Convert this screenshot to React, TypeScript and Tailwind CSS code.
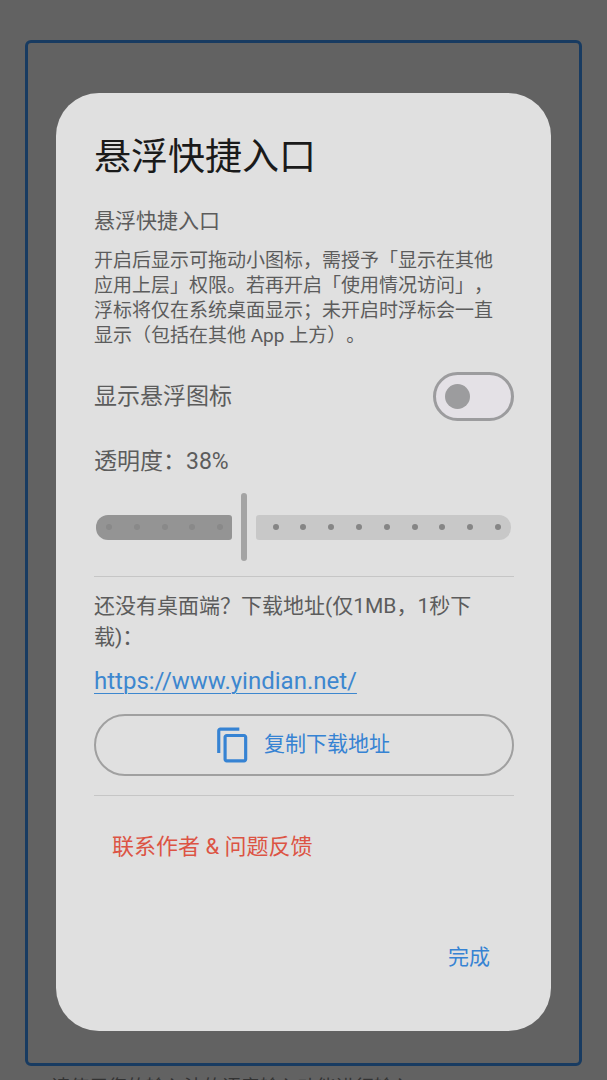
import React, { useState } from "react";

interface OpacitySliderProps {
  value: number;
  onChange: (value: number) => void;
}

const MIN_OPACITY = 5;
const MAX_OPACITY = 100;
const TICKS = Array.from({ length: 15 }, (_, i) => i / 14);

const DOWNLOAD_URL = "https://www.yindian.net/";

const CopyIcon: React.FC = () => (
  <svg viewBox="0 0 24 24" className="size-[38px]" fill="currentColor" aria-hidden="true">
    <path d="M16 1H4c-1.100 0-2 .9-2 2v14h2V3h12V1zm3 4H8c-1.100 0-2 .9-2 2v14c0 1.100.9 2 2 2h11c1.100 0 2-.9 2-2V7c0-1.100-.9-2-2-2zm0 16H8V7h11v14z" />
  </svg>
);

const OpacitySlider: React.FC<OpacitySliderProps> = ({ value, onChange }) => {
  const ratio = (value - MIN_OPACITY) / (MAX_OPACITY - MIN_OPACITY);

  return (
    <div className="relative mr-[3px] ml-0.5 mt-[15px] h-17">
      <div className="flex h-full items-center gap-[9px]">
        <div
          className="h-[25px] rounded-l-[12px] rounded-r-[3px] bg-[#949494]"
          style={{ flex: `${ratio} 1 0%` }}
        />
        <div className="h-full w-1.5 rounded-full bg-[#a4a4a4]" />
        <div
          className="h-[25px] rounded-l-[3px] rounded-r-[12px] bg-[#c8c8c8]"
          style={{ flex: `${1 - ratio} 1 0%` }}
        />
      </div>
      <div className="absolute inset-0 flex items-center justify-between px-[10px]">
        {TICKS.map((tick) => {
          const covered = Math.abs(tick - ratio) < 0.03;
          const color = tick < ratio ? "bg-[#898989]" : "bg-[#868686]";
          return (
            <span
              key={tick}
              className={`size-1.5 rounded-full ${covered ? "invisible" : color}`}
            />
          );
        })}
      </div>
      <input
        id="opacity"
        type="range"
        min={MIN_OPACITY}
        max={MAX_OPACITY}
        value={value}
        onChange={(e) => onChange(Number(e.target.value))}
        className="absolute inset-0 h-full w-full cursor-pointer opacity-0"
      />
    </div>
  );
};

const App: React.FC = () => {
  const [floating, setFloating] = useState(false);
  const [opacity, setOpacity] = useState(38);

  return (
    <div className="relative h-screen overflow-hidden bg-[#626262] font-['Roboto','Noto_Sans_CJK_SC',sans-serif] [text-spacing-trim:space-all]">
      <main className="px-[25px] pt-10">
        <textarea
          aria-label="输入内容"
          readOnly
          className="block h-[95vh] w-full resize-none rounded-md border-3 border-[#183b61] outline-none"
        />
        <p className="mt-2 ml-[26px] text-[19px] leading-7 text-[#333333]">
          请使用您的输入法的语音输入功能进行输入
        </p>
      </main>

      <div className="absolute inset-0 flex items-center px-14 pt-11">
        <div
          role="dialog"
          aria-modal="true"
          aria-labelledby="dialog-title"
          className="w-full rounded-[43px] bg-[#e0e0e0] pt-[41px] pr-[37px] pb-[43px] pl-[38px] text-[#5c5c5c]"
        >
          <h1 id="dialog-title" className="text-[37px] leading-12 text-[#1a1a1a]">
            悬浮快捷入口
          </h1>

          <h2 className="mt-6 text-[21px] leading-[30px]">悬浮快捷入口</h2>
          <p className="mt-3 pr-3 text-[19px] leading-[25px]">
            开启后显示可拖动小图标，需授予「显示在其他应用上层」权限。若再开启「使用情况访问」，浮标将仅在系统桌面显示；未开启时浮标会一直显示（包括在其他
            App 上方）。
          </p>

          <div className="mt-6 flex items-center justify-between">
            <label htmlFor="floating" className="text-[23px] leading-8">
              显示悬浮图标
            </label>
            <input
              id="floating"
              type="checkbox"
              role="switch"
              checked={floating}
              onChange={(e) => setFloating(e.target.checked)}
              className="flex h-[49px] w-[81px] appearance-none items-center rounded-full border-3 border-[#9c9c9e] bg-[#e4e1e6] px-[9px] before:size-[25px] before:rounded-full before:bg-[#9c9c9e] checked:justify-end checked:bg-[#b9d2ee]"
            />
          </div>

          <label htmlFor="opacity" className="mt-[25px] block text-[23px] leading-8">
            透明度：{opacity}%
          </label>
          <OpacitySlider value={opacity} onChange={setOpacity} />

          <hr className="mt-[15px] border-[#c6c6c6]" />

          <p className="mt-[14px] text-[21px] leading-[31px]">
            还没有桌面端？下载地址(仅1MB，1秒下载)：
          </p>
          <a
            href={DOWNLOAD_URL}
            className="mt-3 block w-fit text-[24px] leading-8 text-[#3d87cf] underline decoration-1 underline-offset-4"
          >
            {DOWNLOAD_URL}
          </a>

          <button
            type="button"
            onClick={() => navigator.clipboard?.writeText(DOWNLOAD_URL)}
            className="mt-[17px] flex h-[62px] w-full items-center justify-center gap-3 rounded-full border-2 border-[#a0a0a0] pr-1 text-[21px] text-[#3683d3]"
          >
            <CopyIcon />
            复制下载地址
          </button>

          <hr className="mt-[19px] border-[#c6c6c6]" />

          <button type="button" className="mt-5 block h-15 px-[18px] text-[22px] text-[#dc5444]">
            联系作者 &amp; 问题反馈
          </button>

          <div className="mt-[52px] flex justify-end">
            <button type="button" className="h-15 px-6 text-[21px] text-[#3683d3]">
              完成
            </button>
          </div>
        </div>
      </div>
    </div>
  );
};

export default App;
